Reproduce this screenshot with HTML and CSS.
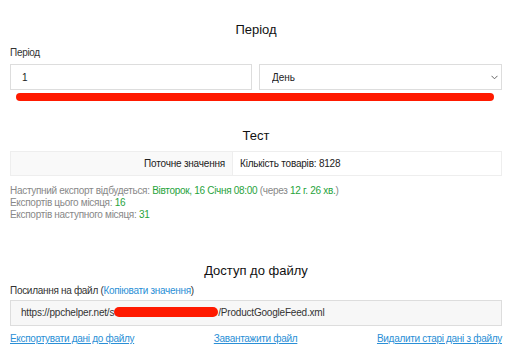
FILE: index.html
```html
<!DOCTYPE html>
<html>
<head>
  <meta charset="UTF-8">
  <title>Експорт</title>
  <link rel="stylesheet" href="styles.css">
</head>
<body>
  <div class="page">

    <h2 class="title first">Період</h2>
    <label class="label">Період</label>
    <div class="row">
      <input type="text" class="field" value="1">
      <div class="select-wrap">
        <select class="field select">
          <option>День</option>
        </select>
        <svg class="chevron" width="7" height="5" viewBox="0 0 7 5"><path d="M0.5 0.8 L3.5 3.8 L6.5 0.8" fill="none" stroke="#666" stroke-width="1"/></svg>
      </div>
    </div>
    <div class="redact-bar"></div>

    <h2 class="title test">Тест</h2>
    <table class="info">
      <tr>
        <td class="key">Поточне значення</td>
        <td>Кількість товарів: 8128</td>
      </tr>
    </table>
    <div class="stats">
      <div>Наступний експорт відбудеться: <span class="ok">Вівторок, 16 Січня 08:00</span> (через <span class="ok">12 г. 26 хв.</span>)</div>
      <div>Експортів цього місяця: <span class="ok">16</span></div>
      <div>Експортів наступного місяця: <span class="ok">31</span></div>
    </div>

    <h2 class="title access">Доступ до файлу</h2>
    <label class="label link-label">Посилання на файл (<a href="#">Копіювати значення</a>)</label>
    <div class="url">https://ppchelper.net/s<span class="redact"></span>/ProductGoogleFeed.xml</div>
    <div class="links">
      <a href="#">Експортувати дані до файлу</a>
      <a href="#">Завантажити файл</a>
      <a href="#">Видалити старі дані з файлу</a>
    </div>

  </div>
</body>
</html>
```

FILE: styles.css
```css
body { margin: 0; font-family: "Liberation Sans", Arial, sans-serif; color: #222; background: #fff; }
.page { padding: 0 10px; }

.title { font-size: 13px; line-height: 16px; font-weight: normal; text-align: center; margin: 0; color: #111; }
.title.first { padding-top: 22px; }
.title.test { margin-top: 27px; }
.title.access { margin-top: 42px; }

.label { display: block; font-size: 10px; letter-spacing: -0.3px; line-height: 12px; color: #333; margin-top: 9px; }
.link-label { margin-top: 6px; }

.row { display: flex; gap: 7px; margin-top: 5px; }
.field { box-sizing: border-box; height: 26px; border: 1px solid #ddd; font-family: inherit; font-size: 10px; color: #222; background: #fff; margin: 0; }
input.field { flex: 0 0 242px; padding: 0 11px; }
.select-wrap { position: relative; flex: 1; }
.select { width: 100%; appearance: none; padding: 0 12px; border-radius: 0; }
.chevron { position: absolute; right: 4px; top: 11px; }

.redact-bar { height: 8px; margin: 3px 8px 0 6px; background: #ff1a00; border-radius: 4px; }

.info { width: 100%; border-collapse: collapse; margin-top: 7px; font-size: 10px; letter-spacing: -0.2px; }
.info td { height: 24px; box-sizing: border-box; padding: 0 7px; border: 1px solid #eee; }
.info .key { width: 222px; text-align: right; background: #f9f9f9; }

.stats { margin-top: 9px; font-size: 10px; letter-spacing: -0.3px; line-height: 12px; color: #888; }
.ok { color: #27a33c; }

a { color: #2a8fd6; }
.link-label a { text-decoration: none; }

.url { box-sizing: border-box; height: 26px; margin-top: 3px; padding: 0 10px; border: 1px solid #ddd; background: #f7f7f7; font-size: 10px; letter-spacing: -0.2px; line-height: 24px; color: #333; }
.redact { display: inline-block; width: 104px; height: 10px; background: #ff1a00; border-radius: 5px; vertical-align: -1px; }

.links { display: flex; justify-content: space-between; margin-top: 7px; font-size: 10px; letter-spacing: -0.3px; line-height: 12px; }
```
